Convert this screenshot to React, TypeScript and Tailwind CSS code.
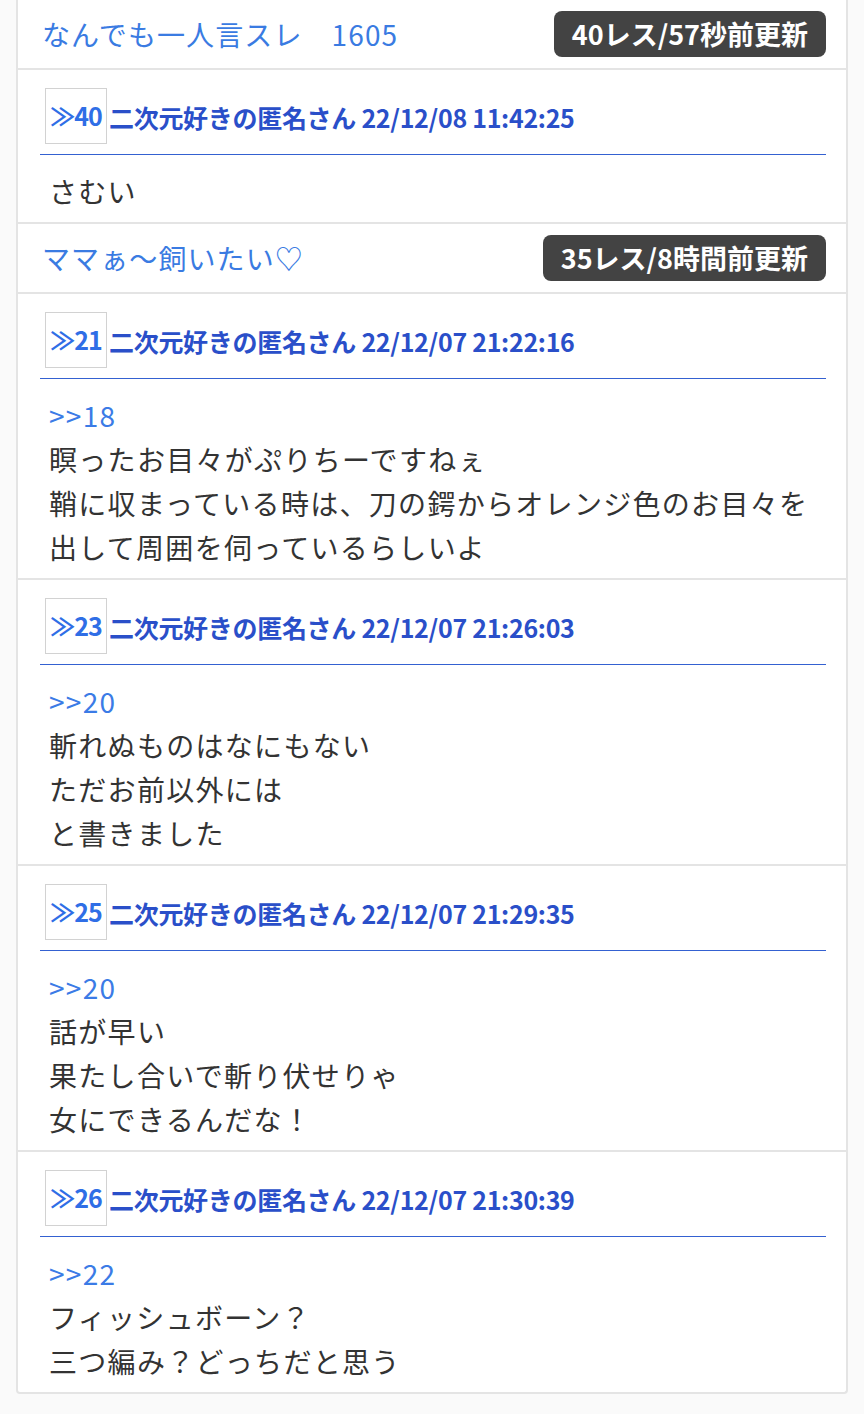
const font = { fontFamily: '"Noto Sans CJK JP", "Noto Sans", sans-serif' };

type Post = {
  no: number;
  date: string;
  anchor?: string;
  lines: string[];
};

type Thread = {
  title: string;
  badge: string;
  posts: Post[];
};

const threads: Thread[] = [
  {
    title: "なんでも一人言スレ　1605",
    badge: "40レス/57秒前更新",
    posts: [{ no: 40, date: "22/12/08 11:42:25", lines: ["さむい"] }],
  },
  {
    title: "ママぁ〜飼いたい♡",
    badge: "35レス/8時間前更新",
    posts: [
      {
        no: 21,
        date: "22/12/07 21:22:16",
        anchor: ">>18",
        lines: [
          "瞑ったお目々がぷりちーですねぇ",
          "鞘に収まっている時は、刀の鍔からオレンジ色のお目々を",
          "出して周囲を伺っているらしいよ",
        ],
      },
      {
        no: 23,
        date: "22/12/07 21:26:03",
        anchor: ">>20",
        lines: ["斬れぬものはなにもない", "ただお前以外には", "と書きました"],
      },
      {
        no: 25,
        date: "22/12/07 21:29:35",
        anchor: ">>20",
        lines: ["話が早い", "果たし合いで斬り伏せりゃ", "女にできるんだな！"],
      },
      {
        no: 26,
        date: "22/12/07 21:30:39",
        anchor: ">>22",
        lines: ["フィッシュボーン？", "三つ編み？どっちだと思う"],
      },
    ],
  },
];

function PostRow({ post }: { post: Post }) {
  return (
    <div className="border-t-2 border-[#e4e4e4] pl-[22px] pr-[20px] pt-[18px] pb-[9px]">
      <div className="flex items-center pb-[10px] border-b-[1.5px] border-[#3461d1]">
        <span className="ml-[5px] flex h-[56px] w-[62px] items-center justify-center border-[1.5px] border-[#d2d2d2] text-[25px] font-bold tracking-[-1px] text-[#2f6ee6]">
          ≫{post.no}
        </span>
        <span className="ml-[2px] pt-[4px] text-[25px] font-bold tracking-[-0.3px] text-[#2a4fc9]">
          二次元好きの匿名さん {post.date}
        </span>
      </div>
      <div className="pt-[14px] pl-[9px] text-[28px] leading-[44px] tracking-[1.3px] text-[#333]">
        {post.anchor && <div className="text-[#3b7be6]">{post.anchor}</div>}
        {post.lines.map((l, i) => (
          <div key={i}>{l}</div>
        ))}
      </div>
    </div>
  );
}

export default function App() {
  return (
    <div className="min-h-[1414px] bg-[#fafafa] pl-[16px]" style={font}>
      <div className="w-[832px] overflow-hidden rounded-b-[4px] border-x-2 border-b-2 border-[#e4e4e4] bg-white">
        {threads.map((t, ti) => (
          <div key={ti} className={ti > 0 ? "border-t-2 border-[#e4e4e4]" : ""}>
            <div className="flex h-[68px] items-center justify-between pl-[24px] pr-[20px]">
              <span className="text-[28px] tracking-[1.1px] text-[#3a7be2]">{t.title}</span>
              <span className="flex h-[46px] items-center rounded-[8px] bg-[#434343] px-[18px] text-[27px] font-bold text-white">
                {t.badge}
              </span>
            </div>
            {t.posts.map((p) => (
              <PostRow key={p.no} post={p} />
            ))}
          </div>
        ))}
      </div>
    </div>
  );
}
